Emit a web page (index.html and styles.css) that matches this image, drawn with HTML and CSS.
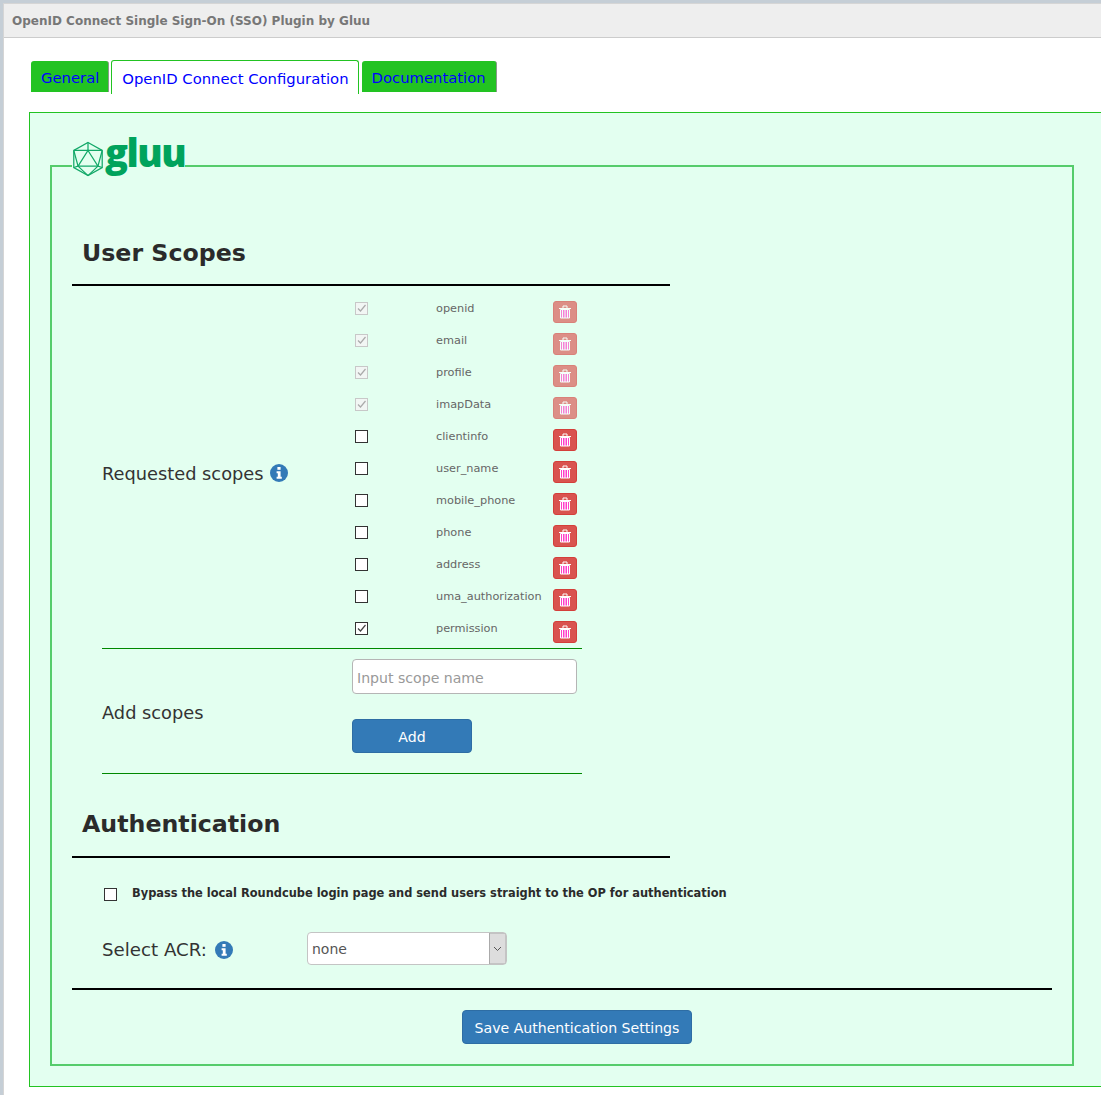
FILE: index.html
```html
<!DOCTYPE html>
<html lang="en">
<head>
	<meta charset="utf-8" />
	<title>OpenID Connect Single Sign-On (SSO) Plugin by Gluu</title>
	<link rel="stylesheet" href="styles.css">
</head>
<body>
	<svg class="defs" width="0" height="0">
		<symbol id="trash" viewBox="0 0 12 14">
			<path class="trash-body" d="M1.500 4.500h9v8.500h-9z" />
			<path class="trash-bars" d="M3.500 5v8M6 5v8M8.500 5v8" />
			<path class="trash-lid" d="M0 3.500h12M4 3.500v-2.500h4v2.500" />
		</symbol>
		<symbol id="info" viewBox="0 0 18 18">
			<circle cx="9" cy="9" r="9" fill="#337ab7" />
			<rect x="7.4" y="3" width="3.2" height="2.8" fill="#fff" />
			<path d="M6.6 7.2h4v5.6h1.2v2h-5.2v-2h1.2v-3.6h-1.2z" fill="#fff" />
		</symbol>
	</svg>

	<div class="panel">
		<div class="panel-title">OpenID Connect Single Sign-On (SSO) Plugin by Gluu</div>

		<ul class="tabs">
			<li class="tab"><a href="#">General</a></li>
			<li class="tab active"><a href="#">OpenID Connect Configuration</a></li>
			<li class="tab"><a href="#">Documentation</a></li>
		</ul>

		<div class="tab-box">
			<fieldset class="settings">
				<legend class="logo">
					<svg class="logo-mark" width="32" height="36" viewBox="0 0 33 38">
						<path d="M16.5 1.5l15 8.5v18l-15 8.500l-15-8.500v-18z" />
						<path d="M16.500 10l10.500 16.500h-21z" />
						<path d="M16.500 1.500v8.500M1.500 10l15 0l15 0M1.500 10l4.500 16.500M31.500 10l-4.500 16.500M1.500 28l4.500-1.500M31.500 28l-4.500-1.500M6 26.500l10.500 10M27 26.500l-10.500 10" />
					</svg>
					<span class="logo-word">gluu</span>
				</legend>

				<h2 class="section-title">User Scopes</h2>

				<div class="form-row scopes-row">
					<div class="row-label">Requested scopes <svg class="info" width="18" height="18"><use href="#info" /></svg></div>
					<div class="scope-list">
						<div class="scope locked"><input type="checkbox" checked disabled><span>openid</span><button class="del" disabled><svg width="12" height="14"><use href="#trash" /></svg></button></div>
						<div class="scope locked"><input type="checkbox" checked disabled><span>email</span><button class="del" disabled><svg width="12" height="14"><use href="#trash" /></svg></button></div>
						<div class="scope locked"><input type="checkbox" checked disabled><span>profile</span><button class="del" disabled><svg width="12" height="14"><use href="#trash" /></svg></button></div>
						<div class="scope locked"><input type="checkbox" checked disabled><span>imapData</span><button class="del" disabled><svg width="12" height="14"><use href="#trash" /></svg></button></div>
						<div class="scope"><input type="checkbox"><span>clientinfo</span><button class="del"><svg width="12" height="14"><use href="#trash" /></svg></button></div>
						<div class="scope"><input type="checkbox"><span>user_name</span><button class="del"><svg width="12" height="14"><use href="#trash" /></svg></button></div>
						<div class="scope"><input type="checkbox"><span>mobile_phone</span><button class="del"><svg width="12" height="14"><use href="#trash" /></svg></button></div>
						<div class="scope"><input type="checkbox"><span>phone</span><button class="del"><svg width="12" height="14"><use href="#trash" /></svg></button></div>
						<div class="scope"><input type="checkbox"><span>address</span><button class="del"><svg width="12" height="14"><use href="#trash" /></svg></button></div>
						<div class="scope"><input type="checkbox"><span>uma_authorization</span><button class="del"><svg width="12" height="14"><use href="#trash" /></svg></button></div>
						<div class="scope"><input type="checkbox" checked><span>permission</span><button class="del"><svg width="12" height="14"><use href="#trash" /></svg></button></div>
					</div>
				</div>

				<div class="form-row add-row">
					<div class="row-label">Add scopes</div>
					<div class="add-fields">
						<input class="scope-input" type="text" placeholder="Input scope name">
						<button class="btn btn-add">Add</button>
					</div>
				</div>

				<h2 class="section-title auth-title">Authentication</h2>

				<label class="bypass"><input type="checkbox"><span>Bypass the local Roundcube login page and send users straight to the OP for authentication</span></label>

				<div class="acr-row">
					<div class="acr-label">Select ACR: <svg class="info" width="18" height="18"><use href="#info" /></svg></div>
					<select class="acr-select"><option>none</option></select>
				</div>

				<div class="save-row">
					<button class="btn btn-save">Save Authentication Settings</button>
				</div>
			</fieldset>
		</div>
	</div>
</body>
</html>
```

FILE: styles.css
```css
html, body {
	height: 100%;
}
body {
	margin: 0;
	padding: 3px 0 0 3px;
	box-sizing: border-box;
	background: #c5ced6;
	font-family: "DejaVu Sans", Verdana, sans-serif;
	color: #333;
	overflow: hidden;
}
.defs {
	position: absolute;
}
.panel {
	background: #fff;
	border-left: 1px solid #d5d5d5;
	border-top: 1px solid #d5d5d5;
	height: 100%;
	overflow: hidden;
}
.panel-title {
	height: 33px;
	line-height: 35px;
	padding-left: 8px;
	background: #eee;
	border-bottom: 1px solid #ccc;
	font-size: 12px;
	font-weight: bold;
	color: #777;
}

/* tabs */
.tabs {
	display: flex;
	align-items: flex-start;
	gap: 2px;
	list-style: none;
	margin: 23px 0 0 27px;
	padding: 0;
	height: 51px;
}
.tab {
	height: 31px;
	line-height: 33px;
	padding: 0 9px 0 10px;
	background: #22c322;
	border-radius: 3px 3px 0 0;
	border-right: 1px solid #8a9a8a;
	font-size: 14.8px;
}
.tab:last-child {
	padding-right: 10px;
}
.tab a {
	color: #00f;
	text-decoration: none;
}
.tab.active {
	height: 33px;
	line-height: 35px;
	background: #fff;
	border: 1px solid #22c322;
	border-bottom: 0;
	margin: -1px 1px 0 0;
}

/* main box */
.tab-box {
	width: 1090px;
	margin-left: 25px;
	padding: 20px 0 20px 20px;
	background: #e3fff0;
	border: 1px solid #22c322;
}
.settings {
	width: 1024px;
	box-sizing: border-box;
	margin: 0;
	padding: 0 20px 20px;
	min-width: 0;
	border: 2px solid #55cc6b;
}
.logo {
	display: flex;
	align-items: flex-start;
	height: 66px;
	padding: 0;
	margin-left: 0;
}
.logo-mark {
	margin-top: 8px;
	fill: none;
	stroke: #12a868;
	stroke-width: 1.3;
}
.logo-word {
	font-family: "Open Sans", sans-serif;
	font-weight: 800;
	font-size: 38px;
	line-height: 39px;
	letter-spacing: -1.5px;
	color: #00a35c;
	margin-left: 1px;
}
.section-title {
	width: 588px;
	margin: 34px 0 0;
	padding: 0 0 11px 10px;
	border-bottom: 2px solid #000;
	font-size: 23.7px;
	line-height: 40px;
	font-weight: bold;
	color: #2b2b2b;
}
.auth-title {
	margin-top: 30px;
	padding-bottom: 12px;
}

/* form rows */
.form-row {
	display: flex;
	width: 480px;
	margin-left: 30px;
	border-bottom: 1px solid #080;
}
.row-label {
	font-size: 17.8px;
	display: flex;
	align-items: center;
	gap: 6px;
}
.scopes-row {
	margin-top: 6px;
	height: 356px;
}
.scopes-row .row-label {
	width: 253px;
	padding-top: 6px;
	box-sizing: border-box;
}
.scope {
	display: grid;
	grid-template-columns: 81px 117px 24px;
	height: 32px;
	align-items: center;
	font-size: 11.3px;
	color: #666;
}
input[type=checkbox] {
	appearance: none;
	width: 13px;
	height: 13px;
	margin: 0;
	background: #fff;
	border: 1px solid #333;
	background-position: center;
	background-repeat: no-repeat;
}
input[type=checkbox]:checked {
	background-image: url("data:image/svg+xml,%3Csvg xmlns='http://www.w3.org/2000/svg' width='11' height='11'%3E%3Cpath d='M2 5.500l2.500 2.500l5-6' fill='none' stroke='%23444' stroke-width='1.200'/%3E%3C/svg%3E");
}
input[type=checkbox]:disabled {
	border-color: #c8c8c8;
	background-color: #f2f6f4;
	background-image: url("data:image/svg+xml,%3Csvg xmlns='http://www.w3.org/2000/svg' width='11' height='11'%3E%3Cpath d='M2 5.500l2.500 2.500l5-6' fill='none' stroke='%23aaa' stroke-width='1.200'/%3E%3C/svg%3E");
}
.del {
	align-self: start;
	display: flex;
	align-items: center;
	justify-content: center;
	width: 24px;
	height: 22px;
	margin-top: 9px;
	padding: 0;
	background: #d9534f;
	border: 1px solid #d43f3a;
	border-radius: 3px;
}
.del:disabled {
	opacity: .65;
}
.trash-body {
	fill: #ff3fc8;
	stroke: #fff;
	stroke-width: 1;
}
.trash-bars,
.trash-lid {
	stroke: #fff;
	stroke-width: 1;
	fill: none;
}

/* add scopes */
.add-row {
	align-items: stretch;
	height: 124px;
}
.add-row .row-label {
	width: 250px;
	padding-top: 2px;
	box-sizing: border-box;
}
.add-fields {
	display: flex;
	flex-direction: column;
	align-items: flex-start;
	gap: 25px;
	padding-top: 10px;
}
.scope-input {
	width: 225px;
	height: 35px;
	box-sizing: border-box;
	padding: 2px 4px 0;
	background: #fff;
	border: 1px solid #b5b5b5;
	border-radius: 4px;
	font: 14.1px "DejaVu Sans", Verdana, sans-serif;
}
.scope-input::placeholder {
	color: #999;
}
.btn {
	background: #337ab7;
	border: 1px solid #2e6da4;
	border-radius: 4px;
	color: #fff;
	font: 14.1px "DejaVu Sans", Verdana, sans-serif;
	padding: 2px 0 0;
}
.btn-add {
	width: 120px;
	height: 34px;
}

/* authentication */
.bypass {
	display: flex;
	align-items: center;
	gap: 15px;
	height: 20px;
	margin: 25px 0 0 32px;
	font-size: 11.42px;
	font-weight: bold;
	color: #2b2b2b;
}
.bypass input {
	margin-top: 2px;
}
.acr-row {
	display: flex;
	align-items: center;
	margin: 29px 0 0 30px;
}
.acr-label {
	display: flex;
	align-items: center;
	gap: 8px;
	width: 205px;
	padding-top: 2px;
	box-sizing: border-box;
	font-size: 18.2px;
}
.acr-select {
	appearance: none;
	width: 200px;
	height: 33px;
	padding: 0 4px;
	border: 1px solid #c4c4c4;
	border-radius: 4px;
	font: 14px "DejaVu Sans", Verdana, sans-serif;
	color: #555;
	background: #fff url("data:image/svg+xml,%3Csvg xmlns='http://www.w3.org/2000/svg' width='17' height='31'%3E%3Crect x='.5' width='16.500' height='31' fill='%23ddd' stroke='%23aaa'/%3E%3Cpath d='M5 14l3.500 3.500l3.500-3.500' fill='none' stroke='%23555'/%3E%3C/svg%3E") no-repeat right center;
}
.save-row {
	display: flex;
	justify-content: center;
	width: 950px;
	margin-top: 23px;
	padding: 20px 0 0 30px;
	border-top: 2px solid #000;
}
.btn-save {
	width: 230px;
	height: 34px;
}
```
